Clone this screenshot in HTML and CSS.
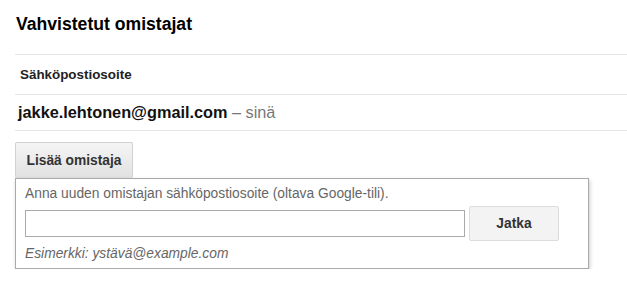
FILE: index.html
```html
<!DOCTYPE html>
<html lang="fi">
<head>
    <meta charset="UTF-8">
    <meta name="viewport" content="width=device-width, initial-scale=1.0">
    <title>Vahvistetut omistajat</title>
    <link rel="stylesheet" href="styles.css">
</head>
<body>
    <div class="owners">
        <h1>Vahvistetut omistajat</h1>
        <table class="owner-table">
            <thead>
                <tr><th>Sähköpostiosoite</th></tr>
            </thead>
            <tbody>
                <tr><td><span class="email">jakke.lehtonen@gmail.com</span> <span class="you">– sinä</span></td></tr>
            </tbody>
        </table>
        <button type="button" class="btn add-btn">Lisää omistaja</button>
        <div class="add-panel">
            <p class="hint">Anna uuden omistajan sähköpostiosoite (oltava Google-tili).</p>
            <div class="add-row">
                <input type="email" class="add-input">
                <button type="button" class="btn next-btn">Jatka</button>
            </div>
            <p class="example">Esimerkki: ystävä@example.com</p>
        </div>
    </div>
</body>
</html>
```

FILE: styles.css
```css
* {
    margin: 0;
    padding: 0;
    box-sizing: border-box;
    font-family: 'Liberation Sans', Arial, sans-serif;
}

body {
    background-color: white;
    color: #222;
}

.owners {
    padding: 14px 0 0 15px;
}

h1 {
    font-size: 17.6px;
    font-weight: bold;
    color: #000;
    padding-left: 1px;
    height: 40px;
}

.owner-table {
    width: 100%;
    border-collapse: collapse;
}

.owner-table th,
.owner-table td {
    text-align: left;
    border-top: 1px solid #e5e5e5;
}

.owner-table th {
    font-size: 13.4px;
    color: #222;
    padding: 0 0 0 5px;
    height: 40px;
}

.owner-table td {
    padding: 0 0 0 3px;
    height: 36px;
    border-bottom: 1px solid #e5e5e5;
}

.email {
    font-size: 16.3px;
    font-weight: bold;
    color: #111;
}

.you {
    font-size: 16.3px;
    color: #777;
}

.btn {
    font-weight: bold;
    font-size: 13.8px;
    color: #333;
    border: 1px solid #ccc;
    border-radius: 2px;
    cursor: pointer;
}

.add-btn {
    display: block;
    margin-top: 11px;
    width: 118px;
    height: 36px;
    background: linear-gradient(#f5f5f5, #e1e1e1);
    border-color: #d0d0d0;
    border-bottom: none;
}

.add-panel {
    width: 574px;
    border: 1px solid #aaa;
    box-shadow: 1px 2px 4px rgba(0, 0, 0, 0.2);
    padding: 6px 10px 6px 9px;
}

.hint {
    font-size: 13.8px;
    color: #666;
    line-height: 18px;
}

.add-row {
    display: flex;
    align-items: center;
    gap: 4px;
    margin-top: 3px;
}

.add-input {
    width: 440px;
    height: 27px;
    border: 1px solid #aaa;
}

.next-btn {
    width: 90px;
    height: 35px;
    background-color: #f3f3f3;
    border-color: #dcdcdc;
}

.example {
    font-size: 13.8px;
    font-style: italic;
    color: #666;
    line-height: 17px;
    margin-top: 4px;
}
```
